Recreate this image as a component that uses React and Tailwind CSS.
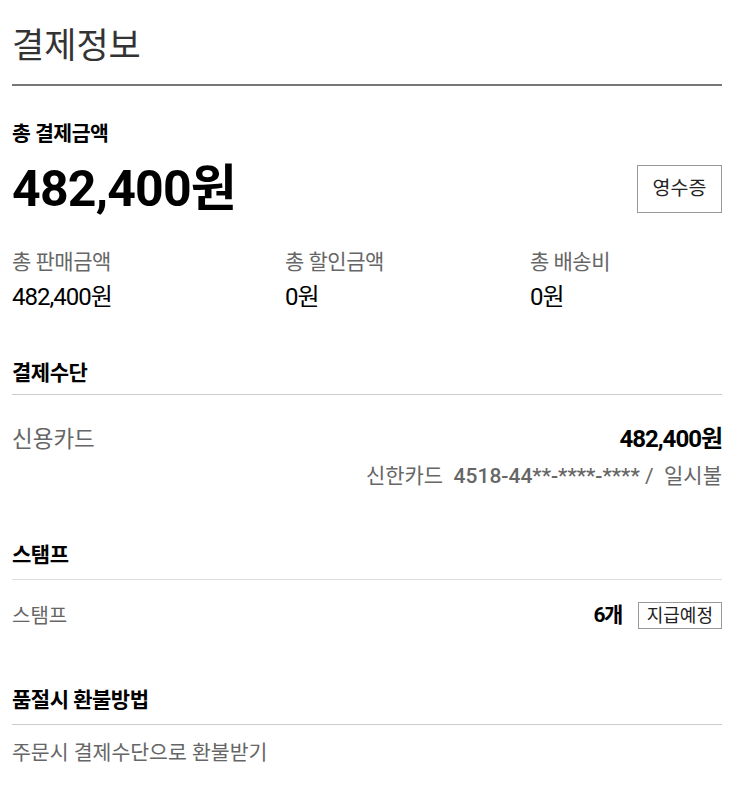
export default function App() {
  const font = { fontFamily: "Roboto, 'Noto Sans CJK KR', sans-serif" };
  return (
    <div className="w-[750px] bg-white pl-[12px] pr-[28px] text-black" style={font}>
      <div className="pt-[24px] pb-[14px] border-b-2 border-[#777]">
        <h1 className="text-[35px] leading-[46px] text-[#333] font-normal">결제정보</h1>
      </div>

      <div className="mt-[35px]">
        <div className="text-[20.5px] leading-[26px] font-bold tracking-[-0.5px]">총 결제금액</div>
        <div className="flex items-center justify-between mt-[14px]">
          <div className="text-[50px] leading-[56px] font-bold tracking-[-0.8px]">482,400원</div>
          <div className="w-[85px] h-[48px] border border-[#999] flex items-center justify-center text-[19.5px] text-[#222]">영수증</div>
        </div>
      </div>

      <div className="grid grid-cols-[273px_245px_1fr] mt-[31px]">
        <div>
          <div className="text-[21px] leading-[28px] text-[#666] tracking-[-0.5px]">총 판매금액</div>
          <div className="text-[24px] leading-[30px] mt-[6px] tracking-[-1px]">482,400원</div>
        </div>
        <div>
          <div className="text-[21px] leading-[28px] text-[#666] tracking-[-0.5px]">총 할인금액</div>
          <div className="text-[24px] leading-[30px] mt-[6px] tracking-[-1px]">0원</div>
        </div>
        <div>
          <div className="text-[21px] leading-[28px] text-[#666] tracking-[-0.5px]">총 배송비</div>
          <div className="text-[24px] leading-[30px] mt-[6px] tracking-[-1px]">0원</div>
        </div>
      </div>

      <div className="mt-[48px] border-b border-[#ccc] pb-[8px]">
        <div className="text-[21px] leading-[26px] font-bold tracking-[-0.5px]">결제수단</div>
      </div>
      <div className="flex justify-between mt-[29px]">
        <div className="text-[22.5px] leading-[30px] text-[#666]">신용카드</div>
        <div className="text-[24px] leading-[30px] font-bold tracking-[-1px]">482,400원</div>
      </div>
      <div className="flex justify-end mt-[8px] text-[21px] leading-[28px] text-[#666]">
        <span>신한카드&nbsp;&nbsp;<span className="font-medium">4518-44**-****-****</span> /&nbsp;&nbsp;일시불</span>
      </div>

      <div className="mt-[51px] border-b border-[#ddd] pb-[10px]">
        <div className="text-[21px] leading-[28px] font-bold tracking-[-0.5px]">스탬프</div>
      </div>
      <div className="flex justify-between items-center mt-[20px]">
        <div className="text-[20px] leading-[28px] text-[#666]">스탬프</div>
        <div className="flex items-center gap-[16px]">
          <span className="text-[21px] font-bold tracking-[-1.5px]">6개</span>
          <span className="border border-[#999] h-[27px] px-[8px] flex items-center text-[18px] text-[#222]">지급예정</span>
        </div>
      </div>

      <div className="mt-[54px] border-b border-[#ccc] pb-[10px]">
        <div className="text-[21px] leading-[28px] font-bold tracking-[-0.5px]">품절시 환불방법</div>
      </div>
      <div className="mt-[14px] pb-[38px] text-[20.5px] leading-[28px] text-[#666]">주문시 결제수단으로 환불받기</div>
    </div>
  );
}
